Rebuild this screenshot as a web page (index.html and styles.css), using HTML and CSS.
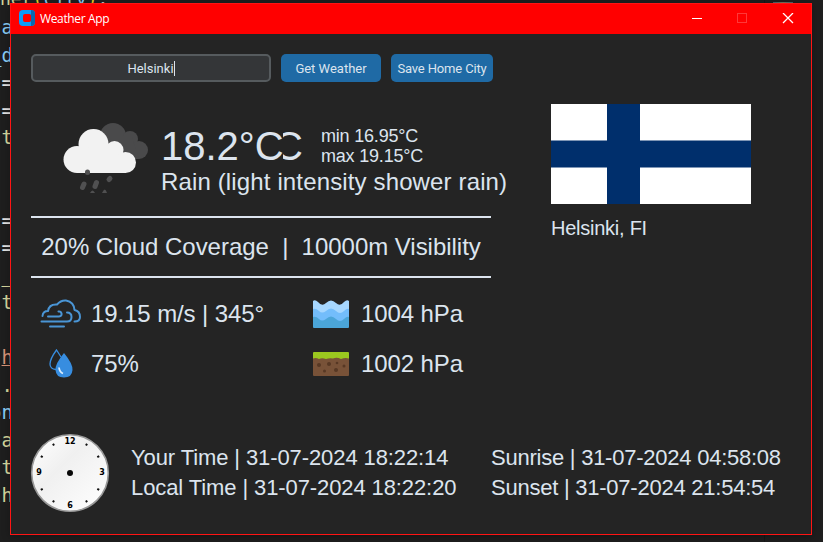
FILE: index.html
```html
<!DOCTYPE html>
<html lang="en">
<head>
<meta charset="utf-8">
<title>Weather App</title>
<link rel="stylesheet" href="styles.css">
</head>
<body>
<div class="workspace" aria-hidden="true">
<div class="editor">
<div class="line first"><i>ner</i><b>(</b><u>city</u><b>)</b>:</div>
<div class="line"><u>a</u></div>
<div class="line"><u>_d</u></div>
<div class="line">=</div>
<div class="line">=</div>
<div class="line"><s>'</s><i>t</i></div>
<div class="line"></div>
<div class="line"></div>
<div class="line">=</div>
<div class="line">=</div>
<div class="line"><i>_</i></div>
<div class="line"><s>'</s><i>t</i></div>
<div class="line"></div>
<div class="line"><em>h</em></div>
<div class="line"><i>.</i></div>
<div class="line"><u>on</u></div>
<div class="line"><s>t</s><i>a</i></div>
<div class="line"><s>'</s><i>t</i></div>
<div class="line"><s>t</s><i>h</i></div>
</div>
<div class="minimap"></div>
</div>
<main class="window">
<header class="titlebar">
<svg class="logo" viewBox="0 0 16 16"><rect width="16" height="16" rx="4" fill="#0a9bfa"/><path d="M12 0Q16 0 16 4V12Q16 16 12 16V11L10 12V4L12 5Z" fill="#0868b0"/><rect x="4" y="4" width="8" height="8" rx="2" fill="#f00"/></svg>
<h1>Weather App</h1>
<svg class="controls" viewBox="0 0 103 12"><path d="M0 5.500H10" stroke="#fff"/><rect x="45.500" y=".500" width="9" height="9" fill="none" stroke="#ff3838"/><path d="M91 0L101 10M101 0L91 10" stroke="#fff" stroke-width="1.300"/></svg>
</header>
<section class="content">
<form class="search">
<div class="field"><span>Helsinki</span></div>
<button type="button">Get Weather</button>
<button type="button" class="save">Save Home City</button>
</form>
<div class="top">
<div class="weather">
<div class="current">
<svg class="cloud" viewBox="0 0 90 80"><g fill="#4a4a4b"><circle cx="54" cy="15" r="13"/><circle cx="71" cy="18" r="8"/><circle cx="80" cy="29" r="9"/><path d="M42 16H73L80 38H55Z"/></g><g fill="#f2f2f2"><circle cx="34.500" cy="23" r="15"/><circle cx="18" cy="38.500" r="13.500"/><circle cx="55.500" cy="29" r="9"/><circle cx="66.500" cy="41.500" r="10.500"/><path d="M18 30L48 22L67 40V52H18Z"/></g><g stroke="#505051" stroke-width="5" stroke-linecap="round"><path d="M28.500 51V51.500M25 63L23.500 66.500M37.500 61.500L36 65.500M51 57.500L50 58.500"/></g><path d="M31 72Q33.500 67 36 72ZM43 72Q46 65 48 72Z" fill="#505051"/></svg>
<div class="reading">
<div class="temps"><div class="degrees">18.2°C</div><div class="unit">C</div><div class="range"><div>min 16.95°C</div><div>max 19.15°C</div></div></div>
<div class="desc">Rain (light intensity shower rain)</div>
</div>
</div>
<div class="coverage">20% Cloud Coverage&nbsp; |&nbsp; 10000m Visibility</div>
</div>
<aside class="place">
<svg class="flag" viewBox="0 0 200 100"><path fill="#fff" d="M0 0H200V100H0Z"/><path fill="#002f6c" d="M56 0H89V36.500H200V63.500H89V100H56V63.500H0V36.500H56Z"/></svg>
<div class="city">Helsinki, FI</div>
</aside>
</div>
<div class="metrics">
<svg viewBox="0 0 42 30"><g fill="none" stroke="#4a95d5" stroke-width="2" stroke-linecap="round" stroke-linejoin="round"><path d="M2.500 17Q3 12 8 12Q9 5 17 5.500Q21 1 26 1.500Q34 3 34.500 11Q40 12 40 18Q40 22.500 34.500 22.500M1.500 22.500H27Q31.500 22.500 31.500 18Q31.500 13.500 27 13.500M8 17.500H19Q22 17 21.500 14.500Q21 12 18.500 12.500M10 27.500H24"/></g></svg>
<span>19.15 m/s | 345°</span>
<svg viewBox="0 0 42 30"><path d="M3 2Q5 0 8 3Q12 8 16 4Q21 -1 26 4Q30 8 34 3Q37 0 39 2V28H3Z" fill="#a6d7ff"/><path d="M3 10Q6 9 9 12Q12 15 16 12Q21 7 26 12Q30 16 34 12Q37 9 39 10V28H3Z" fill="#73bdfb"/><path d="M3 18Q6 17 9 20Q12 23 16 20Q21 15 26 20Q30 24 34 20Q37 17 39 18V28Q39 29 38 29H4Q3 29 3 28Z" fill="#4ba5d8"/></svg>
<span>1004 hPa</span>
<svg viewBox="0 0 42 30"><path d="M21 8L16.500 1Q10 10 10 15Q10 20 16 20.500" fill="none" stroke="#378de0" stroke-width="1.300"/><path d="M24 4Q15 15 15.500 21Q16 28.500 24 28.500Q32 28.500 32.500 21Q33 15 24 4Z" fill="#378de0"/><path d="M19 18.500Q19.500 23 23 24.500" fill="none" stroke="#d8edff" stroke-width="1.800"/></svg>
<span>75%</span>
<svg viewBox="0 0 42 30"><path d="M3 8H39V26Q39 27 38 27H4Q3 27 3 26Z" fill="#785238"/><path d="M3 4Q3 3 4 3H38Q39 3 39 4V9.500Q35 8.500 31 10Q27 8 23 9.500Q19 9 16 10Q12 8.500 9 10Q6 8.500 3 9.500Z" fill="#9bc81f"/><g fill="#573824"><circle cx="9" cy="16" r="2"/><circle cx="19" cy="15" r="2"/><circle cx="27" cy="14" r="1.300"/><circle cx="34" cy="17" r="1.500"/><circle cx="26" cy="21" r="2"/><circle cx="14.500" cy="22" r="1.500"/></g></svg>
<span>1002 hPa</span>
</div>
<footer class="times">
<svg class="clock" viewBox="0 0 80 80"><defs><linearGradient id="face" x2="1" y2="1"><stop stop-color="#fff"/><stop offset=".4" stop-color="#f0f0f0"/><stop offset="1" stop-color="#fff"/></linearGradient></defs><circle cx="40" cy="40" r="38.300" fill="url(#face)" stroke="#999" stroke-width="1.600"/><circle cx="40" cy="40" r="3" fill="#080808"/><g stroke="#111" stroke-width="2"><path d="M56 12.500L57 10.700M67.300 24.200L69.200 23.100M67.300 55.800L69.200 56.900M56 67.500L57 69.300M24 67.500L23 69.300M12.700 55.800L10.800 56.900M12.700 24.200L10.800 23.100M24 12.500L23 10.700"/></g><g text-anchor="middle"><text x="40" y="11">12</text><text x="72" y="42">3</text><text x="40" y="74.500">6</text><text x="9" y="42">9</text></g></svg>
<div class="time"><div>Your Time | 31-07-2024 18:22:14</div><div>Local Time | 31-07-2024 18:22:20</div></div>
<div class="time sun"><div>Sunrise | 31-07-2024 04:58:08</div><div>Sunset | 31-07-2024 21:54:54</div></div>
</footer>
</section>
</main>
</body>
</html>
```
FILE: styles.css
```css
* { box-sizing: border-box; }
body { margin: 0; width: 823px; height: 542px; overflow: hidden; background: #1e1e1e; color: #dce4ee; font-family: "Liberation Sans", Arial, sans-serif; }
.workspace { display: flex; justify-content: space-between; }
.minimap { width: 59px; height: 542px; border-left: 1px solid #171717; background: linear-gradient(90deg, #46606c, #77745b, #46606c) 8px 2px / 20px 1px no-repeat; }
.editor { padding-top: 12px; width: 120px; height: 542px; overflow: hidden; font: 19px/27.5px "DejaVu Sans Mono", monospace; color: #e4e4e4; }
.line { width: 13px; height: 27.5px; display: flex; justify-content: flex-end; white-space: pre; }
.line.first { width: 120px; margin-top: -27px; margin-bottom: 1.5px; justify-content: flex-start; font-size: 18px; }
.editor i, .editor b, .editor u, .editor s, .editor em { font-style: normal; font-weight: normal; text-decoration: none; }
.editor i { color: #d6d69c; }
.editor b { color: #e9ce22; }
.editor u { color: #8accf5; }
.editor s { color: #c22f2f; }
.editor em { color: #d79378; text-decoration: underline; }
.window { position: absolute; left: 10px; top: 3px; width: 802px; height: 532px; background: #242424; border: 1px solid #ff1414; box-shadow: 0 2px 8px #0004; }
.titlebar { display: flex; align-items: center; height: 30px; padding: 0 16px 0 8px; background: #f00; color: #fff; }
.logo { width: 16px; height: 16px; margin-top: -2px; }
h1 { margin: -1px auto 0 5px; font: 12px "Open Sans", sans-serif; letter-spacing: -.35px; }
.controls { width: 103px; height: 12px; }
.content { padding: 20px 20px 0; }
.search { display: flex; gap: 10px; height: 28px; font: 13px Roboto, sans-serif; }
.field { display: flex; width: 240px; align-items: center; justify-content: center; background: #343638; border: 2px solid #565b5e; border-radius: 5px; }
.field span { border-right: 1px solid #dce4ee; }
button { width: 100px; padding: 0; border: 0; border-radius: 5px; background: #1f6aa5; color: #dce4ee; font: inherit; white-space: nowrap; }
.save { width: 102px; letter-spacing: -.15px; }
.top { display: flex; height: 196px; padding-top: 22px; gap: 60px; }
.weather { width: 460px; }
.current { display: flex; height: 112px; padding-left: 28px; }
.cloud { width: 90px; height: 80px; margin-top: 17px; flex: none; }
.reading { padding: 18px 0 0 12px; white-space: nowrap; }
.temps { display: flex; height: 46px; }
.degrees, .unit { font-size: 40px; line-height: 48px; }
.degrees { width: 122px; }
.unit { display: flex; justify-content: flex-end; width: 20px; overflow: hidden; }
.range { margin: 4px 0 0 18px; font-size: 18px; line-height: 20px; letter-spacing: -.2px; }
.desc { font-size: 24px; line-height: 28px; letter-spacing: .14px; }
.coverage { height: 62px; border-top: 2px solid #dce4ee; border-bottom: 2px solid #dce4ee; font-size: 24px; line-height: 58px; text-align: center; white-space: nowrap; letter-spacing: -.03px; }
.flag { display: block; width: 200px; height: 100px; }
.city { margin-top: 12px; font-size: 20px; line-height: 24px; letter-spacing: -.25px; }
.metrics { display: grid; grid-template-columns: 42px 210px 42px 1fr; grid-auto-rows: 50px; column-gap: 9px; align-items: center; height: 100px; margin: 11px 0 0 9px; font-size: 24px; white-space: nowrap; letter-spacing: -.1px; }
.metrics svg { width: 42px; height: 30px; }
.times { display: flex; margin-top: 44px; font-size: 22px; line-height: 30px; white-space: nowrap; }
.clock { width: 80px; height: 80px; margin: 0 21px 0 -1px; flex: none; }
.clock text { font: bold 8px "DejaVu Sans"; }
.time { width: 360px; flex: none; padding-top: 10px; letter-spacing: -.1px; }
.sun { width: 300px; letter-spacing: -.24px; }
```
